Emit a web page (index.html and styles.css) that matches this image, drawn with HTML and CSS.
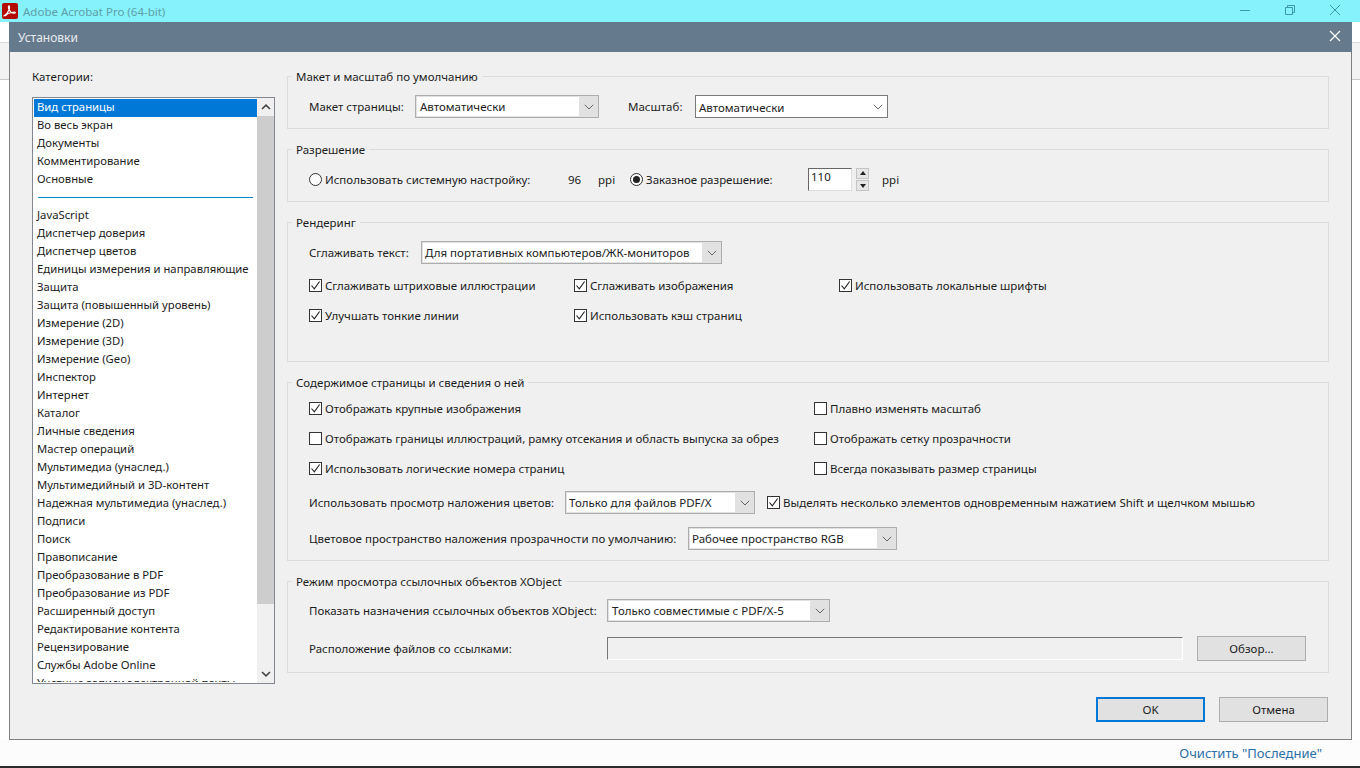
FILE: index.html
```html
<!DOCTYPE html>
<html lang="ru">
<head>
<meta charset="utf-8">
<title>Установки</title>
<link rel="stylesheet" href="styles.css">
</head>
<body>
<svg class="defs" width="0" height="0" aria-hidden="true">
  <symbol id="chev" viewBox="0 0 10 6"><path d="M.8.8 5 5 9.2.8" fill="none" stroke="#666" stroke-width="1"/></symbol>
  <symbol id="tick" viewBox="0 0 11 11"><path d="M1.5 5.500 4.300 8.800 9.600 1.500" fill="none" stroke="#222" stroke-width="1.100"/></symbol>
</svg>
<div class="app">
  <header class="apptitle">
    <svg class="applogo" viewBox="0 0 16 16"><rect width="16" height="16" rx="2" fill="#b30b00"/><path d="M2.600 12.600c1.600-.9 3.500-3.700 4.600-6.400.5-1.300.6-3.300-.2-3.300-.9 0-.7 2.100 0 3.500 1 2.100 2.800 3.700 4.900 3.900 1.100.1 1.700-.4 1.400-.9-.4-.6-2.200-.4-4 .1-1.700.4-4 1.300-5.300 2.300-1 .8-1.100 1.300-.4.800z" fill="none" stroke="#fff" stroke-width="1.100"/></svg>
    <span class="apptitle-text">Adobe Acrobat Pro (64-bit)</span>
    <div class="winbtns">
      <svg viewBox="0 0 10 10"><path d="M0 5.500h10" stroke="#3a9aa6" fill="none"/></svg>
      <svg viewBox="0 0 10 10"><path d="M.5 2.500h7v7h-7zM2.500 2.500v-2h7v7h-2" stroke="#3a9aa6" fill="none"/></svg>
      <svg viewBox="0 0 10 10"><path d="M0 0l10 10M10 0 0 10" stroke="#3a9aa6" fill="none"/></svg>
    </div>
  </header>
  <main class="appbody">
    <div class="stripe-left"></div>
    <div class="stripe-right"></div>
  </main>
  <footer class="appfoot"><span class="clear-link">Очистить "Последние"</span></footer>
  <div class="taskbar"></div>
</div>

<section class="dialog">
  <header class="dlg-head">
    <span>Установки</span>
    <svg class="dlg-close" viewBox="0 0 12 12"><path d="M1 1l10 10M11 1 1 11" stroke="#fff" stroke-width="1.200" fill="none"/></svg>
  </header>
  <div class="dlg-body">
    <aside class="cats">
      <div class="cats-label">Категории:</div>
      <div class="listbox">
        <ul class="items">
          <li class="sel">Вид страницы</li>
          <li>Во весь экран</li>
          <li>Документы</li>
          <li>Комментирование</li>
          <li>Основные</li>
          <li class="sep"></li>
          <li>JavaScript</li>
          <li>Диспетчер доверия</li>
          <li>Диспетчер цветов</li>
          <li>Единицы измерения и направляющие</li>
          <li>Защита</li>
          <li>Защита (повышенный уровень)</li>
          <li>Измерение (2D)</li>
          <li>Измерение (3D)</li>
          <li>Измерение (Geo)</li>
          <li>Инспектор</li>
          <li>Интернет</li>
          <li>Каталог</li>
          <li>Личные сведения</li>
          <li>Мастер операций</li>
          <li>Мультимедиа (унаслед.)</li>
          <li>Мультимедийный и 3D-контент</li>
          <li>Надежная мультимедиа (унаслед.)</li>
          <li>Подписи</li>
          <li>Поиск</li>
          <li>Правописание</li>
          <li>Преобразование в PDF</li>
          <li>Преобразование из PDF</li>
          <li>Расширенный доступ</li>
          <li>Редактирование контента</li>
          <li>Рецензирование</li>
          <li>Службы Adobe Online</li>
          <li>Учетные записи электронной почты</li>
        </ul>
        <div class="sbar">
          <svg class="sb-up" viewBox="0 0 10 6"><path d="M1 5 5 1.200 9 5" fill="none" stroke="#444" stroke-width="1.600"/></svg>
          <div class="sb-thumb"></div>
          <svg class="sb-down" viewBox="0 0 10 6"><path d="M1 1 5 4.800 9 1" fill="none" stroke="#444" stroke-width="1.600"/></svg>
        </div>
      </div>
    </aside>

    <div class="panel">
      <div class="group g1">
        <div class="legend">Макет и масштаб по умолчанию</div>
        <div class="row r-layout">
          <span class="lbl l1">Макет страницы:</span>
          <div class="combo c1"><span class="combo-val">Автоматически</span><svg class="chev"><use href="#chev"/></svg></div>
          <span class="lbl l2">Масштаб:</span>
          <div class="combo white c2"><span class="combo-val">Автоматически</span><svg class="chev"><use href="#chev"/></svg></div>
        </div>
      </div>

      <div class="group g2">
        <div class="legend">Разрешение</div>
        <div class="row r-res">
          <span class="radio"></span><span class="lbl w-sys">Использовать системную настройку:</span>
          <span class="lbl w-96">96</span><span class="lbl w-ppi">ppi</span>
          <span class="radio on"></span><span class="lbl w-cust">Заказное разрешение:</span>
          <div class="spin-field">110</div>
          <div class="spin"><span class="up"></span><span class="down"></span></div>
          <span class="lbl">ppi</span>
        </div>
      </div>

      <div class="group g3">
        <div class="legend">Рендеринг</div>
        <div class="row r-smooth">
          <span class="lbl l3">Сглаживать текст:</span>
          <div class="combo c3"><span class="combo-val">Для портативных компьютеров/ЖК-мониторов</span><svg class="chev"><use href="#chev"/></svg></div>
        </div>
        <div class="checks three">
          <label class="chk"><span class="box"><svg><use href="#tick"/></svg></span>Сглаживать штриховые иллюстрации</label>
          <label class="chk"><span class="box"><svg><use href="#tick"/></svg></span>Сглаживать изображения</label>
          <label class="chk"><span class="box"><svg><use href="#tick"/></svg></span>Использовать локальные шрифты</label>
          <label class="chk"><span class="box"><svg><use href="#tick"/></svg></span>Улучшать тонкие линии</label>
          <label class="chk"><span class="box"><svg><use href="#tick"/></svg></span>Использовать кэш страниц</label>
        </div>
      </div>

      <div class="group g4">
        <div class="legend">Содержимое страницы и сведения о ней</div>
        <div class="checks two">
          <label class="chk"><span class="box"><svg><use href="#tick"/></svg></span>Отображать крупные изображения</label>
          <label class="chk"><span class="box"></span>Плавно изменять масштаб</label>
          <label class="chk"><span class="box"></span>Отображать границы иллюстраций, рамку отсекания и область выпуска за обрез</label>
          <label class="chk"><span class="box"></span>Отображать сетку прозрачности</label>
          <label class="chk"><span class="box"><svg><use href="#tick"/></svg></span>Использовать логические номера страниц</label>
          <label class="chk"><span class="box"></span>Всегда показывать размер страницы</label>
        </div>
        <div class="row r-over">
          <span class="lbl l4">Использовать просмотр наложения цветов:</span>
          <div class="combo c4"><span class="combo-val">Только для файлов PDF/X</span><svg class="chev"><use href="#chev"/></svg></div>
          <label class="chk"><span class="box"><svg><use href="#tick"/></svg></span>Выделять несколько элементов одновременным нажатием Shift и щелчком мышью</label>
        </div>
        <div class="row r-space">
          <span class="lbl l5">Цветовое пространство наложения прозрачности по умолчанию:</span>
          <div class="combo c5"><span class="combo-val">Рабочее пространство RGB</span><svg class="chev"><use href="#chev"/></svg></div>
        </div>
      </div>

      <div class="group g5">
        <div class="legend">Режим просмотра ссылочных объектов XObject</div>
        <div class="row r-dest">
          <span class="lbl l6">Показать назначения ссылочных объектов XObject:</span>
          <div class="combo c6"><span class="combo-val">Только совместимые с PDF/X-5</span><svg class="chev"><use href="#chev"/></svg></div>
        </div>
        <div class="row r-path">
          <span class="lbl l6">Расположение файлов со ссылками:</span>
          <div class="path-field"></div>
          <div class="btn browse">Обзор...</div>
        </div>
      </div>

      <div class="actions">
        <div class="btn ok">OK</div>
        <div class="btn">Отмена</div>
      </div>
    </div>
  </div>
</section>
</body>
</html>
```

FILE: styles.css
```css
* { box-sizing: border-box; }
html, body { margin: 0; padding: 0; width: 1360px; height: 768px; overflow: hidden; }
body {
  font-family: "Noto Sans", "Open Sans", sans-serif;
  font-size: 11.500px;
  color: #1c1c1c;
  background: #fff;
  position: relative;
}
.defs { position: absolute; }

.app { display: flex; flex-direction: column; height: 768px; }
.apptitle {
  height: 22px;
  background: #86f2fb;
  display: flex;
  align-items: center;
  padding-left: 2px;
  flex: none;
}
.applogo { width: 16px; height: 16px; margin-right: 5px; }
.apptitle-text { font-size: 11.500px; color: #5f9fa8; }
.winbtns { margin-left: auto; display: flex; gap: 35px; padding-right: 20px; margin-top: -2px; }
.winbtns svg { width: 10px; height: 10px; }
.appbody { flex: 1; display: flex; justify-content: space-between; }
.stripe-left, .stripe-right {
  height: 38px;
  margin-top: 20px;
  border-top: 1px solid #d8d8d8;
  border-bottom: 1px solid #c8c8c8;
  background: #f3f3f3;
}
.stripe-left { width: 9px; }
.stripe-right { width: 8px; }
.appfoot {
  height: 26px;
  flex: none;
  display: flex;
  justify-content: flex-end;
  align-items: center;
  padding-right: 38px;
  background: #fcfcfc;
}
.clear-link { font-size: 13px; color: #2a6fa8; }
.taskbar { height: 2px; background: #2d2d2d; flex: none; }

.dialog {
  position: absolute;
  left: 9px;
  top: 22px;
  width: 1343px;
  height: 718px;
  background: #f0f0f0;
  border: 1px solid #7f7f7f;
  border-top: 0;
  display: flex;
  flex-direction: column;
}
.dlg-head {
  height: 30px;
  flex: none;
  margin: 0 -1px;
  background: #667a8e;
  color: #e8ebee;
  display: flex;
  align-items: center;
  justify-content: space-between;
  padding: 0 11px 0 9px;
  font-size: 12px;
}
.dlg-close { width: 12px; height: 12px; margin-top: -2px; }
.dlg-body { flex: 1; display: flex; padding: 17px 22px 0 22px; gap: 12px; }

.cats { width: 243px; flex: none; }
.cats-label { height: 28px; line-height: 16px; }
.listbox {
  height: 587px;
  background: #fff;
  border: 1px solid #828790;
  display: flex;
  overflow: hidden;
  padding: 1px 0 0 1px;
}
.items { list-style: none; margin: 0; padding: 0; flex: 1; min-width: 0; height: 583px; overflow: hidden; font-size: 11.300px; }
.items li { height: 18px; line-height: 16px; padding-left: 3px; white-space: nowrap; }
.items li.sel { background: #0078d7; color: #fff; }
.items li.sep { background: linear-gradient(#0a86c4, #0a86c4) no-repeat 4px 8px / 215px 1px; }
.sbar { width: 17px; flex: none; background: #f0f0f0; display: flex; flex-direction: column; align-items: center; margin-top: -1px; }
.sb-up, .sb-down { width: 10px; height: 6px; flex: none; margin: 6px 0; }
.sb-thumb { width: 17px; height: 488px; background: #cdcdcd; }
.sb-down { margin-top: auto; }

.panel { flex: 1; min-width: 0; padding-top: 7px; }
.group {
  border: 1px solid #dcdcdc;
  padding: 0 0 0 21px;
}
.legend {
  margin: -9px 0 0 -17px;
  padding: 0 4px;
  background: #f0f0f0;
  width: max-content;
  height: 17px;
  line-height: 17px;
}
.g1 { height: 53px; }
.g2 { height: 53px; margin-top: 20px; }
.g3 { height: 140px; margin-top: 20px; }
.g4 { height: 179px; margin-top: 20px; }
.g5 { height: 92px; margin-top: 20px; }

.row { display: flex; align-items: center; white-space: nowrap; }
.lbl { flex: none; }
.combo {
  height: 23px;
  flex: none;
  border: 1px solid #adadad;
  background: #e1e1e1;
  display: flex;
  align-items: center;
  justify-content: space-between;
  padding: 1px 4px 1px 1px;
}
.combo-val { background: #fff; align-self: stretch; display: flex; align-items: center; padding-left: 3px; flex: 1; margin-right: 5px; }
.c2 .combo-val, .c3 .combo-val, .c4 .combo-val, .c5 .combo-val { padding-left: 2px; }
.combo.white { background: #fff; border-color: #7a7a7a; padding-right: 4px; }
.combo.white .combo-val { margin-right: 0; padding-top: 2px; }
.chev { width: 10px; height: 6px; flex: none; }

.r-layout { margin-top: 10px; }
.l1 { width: 106px; }
.c1 { width: 184px; }
.l2 { margin-left: 29px; width: 67px; }
.c2 { width: 193px; }

.r-res { margin-top: 10px; height: 22px; }
.radio {
  width: 13px; height: 13px; flex: none;
  border: 1px solid #333; border-radius: 50%; background: #fff;
  margin-right: 3px;
  position: relative;
}
.radio.on::after {
  content: ""; position: absolute; left: 2px; top: 2px; width: 7px; height: 7px;
  border-radius: 50%; background: #222;
}
.w-sys { width: 243px; }
.w-96 { width: 30px; }
.w-ppi { width: 32px; }
.w-cust { width: 162px; }
.spin-field {
  width: 44px; height: 23px; flex: none;
  background: #fff;
  border: 1px solid; border-color: #666 #ddd #ddd #666;
  padding-left: 2px; line-height: 16px;
}
.spin { width: 13px; height: 23px; margin: 0 13px 0 4px; display: flex; flex-direction: column; gap: 1px; flex: none; }
.spin span { flex: 1; background: #e6e6e6; border: 1px solid #c4c4c4; position: relative; }
.spin .up::after {
  content: ""; position: absolute; left: 3px; top: 2px;
  border: 3px solid transparent; border-top: 0; border-bottom: 4px solid #222;
}
.spin .down::after {
  content: ""; position: absolute; left: 3px; top: 3px;
  border: 3px solid transparent; border-bottom: 0; border-top: 4px solid #222;
}

.r-smooth { margin-top: 10px; }
.l3 { width: 112px; }
.c3 { width: 301px; }

.checks { display: grid; }
.checks .chk { height: 30px; }
.three { grid-template-columns: 265px 265px 1fr; margin-top: 6px; }
.two { grid-template-columns: 505px 1fr; margin-top: 2px; }
.chk { display: flex; align-items: center; white-space: nowrap; }
.box {
  width: 13px; height: 13px; flex: none;
  border: 1px solid #333; background: #fff;
  margin-right: 3px;
  display: flex; align-items: center; justify-content: center;
}
.box svg { width: 11px; height: 11px; }

.r-over { margin-top: 8px; height: 23px; }
.l4 { width: 256px; }
.c4 { width: 190px; margin-right: 12px; }
.r-space { margin-top: 13px; }
.l5 { width: 379px; }
.c5 { width: 209px; }

.r-dest { margin-top: 9px; }
.l6 { width: 298px; }
.c6 { width: 223px; }
.r-path { margin-top: 14px; }
.path-field {
  width: 576px; height: 23px; flex: none;
  border: 1px solid; border-color: #777 #fff #fff #777;
  background: #f0f0f0;
  margin-right: 14px;
}
.btn {
  width: 109px; height: 25px; flex: none;
  background: #e1e1e1; border: 1px solid #adadad;
  display: flex; align-items: center; justify-content: center;
}
.btn.ok { border: 2px solid #0078d7; }
.actions { display: flex; justify-content: flex-end; gap: 14px; margin-top: 24px; padding-right: 1px; }
```
